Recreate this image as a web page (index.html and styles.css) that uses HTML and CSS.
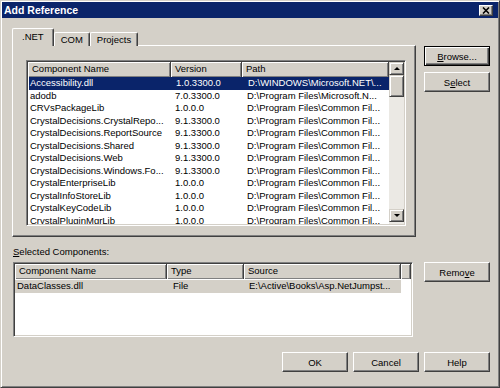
FILE: index.html
```html
<!DOCTYPE html>
<html lang="en">
<head>
  <meta charset="UTF-8">
  <title>Add Reference</title>
  <link rel="stylesheet" href="styles.css">
</head>
<body>
  <div class="window">
    <div class="titlebar">
      <span>Add Reference</span>
      <div class="close">
        <svg width="8" height="7" viewBox="0 0 8 7"><path d="M1 0.5 L7 6.5 M7 0.5 L1 6.5" stroke="#000" stroke-width="1.6"/></svg>
      </div>
    </div>

    <div class="dialog">
      <div class="upper">
        <div class="tabbox">
          <div class="tabs">
            <div class="tab active">.NET</div>
            <div class="tab">COM</div>
            <div class="tab">Projects</div>
          </div>
          <div class="panel">
            <div class="listview refs">
              <div class="lv-body">
                <div class="lv-head">
                  <div>Component Name</div>
                  <div>Version</div>
                  <div>Path</div>
                </div>
                <div class="lv-row selected"><div>Accessibility.dll</div><div>1.0.3300.0</div><div>D:\WINDOWS\Microsoft.NET\...</div></div>
                <div class="lv-row"><div>adodb</div><div>7.0.3300.0</div><div>D:\Program Files\Microsoft.N...</div></div>
                <div class="lv-row"><div>CRVsPackageLib</div><div>1.0.0.0</div><div>D:\Program Files\Common Fil...</div></div>
                <div class="lv-row"><div>CrystalDecisions.CrystalRepo...</div><div>9.1.3300.0</div><div>D:\Program Files\Common Fil...</div></div>
                <div class="lv-row"><div>CrystalDecisions.ReportSource</div><div>9.1.3300.0</div><div>D:\Program Files\Common Fil...</div></div>
                <div class="lv-row"><div>CrystalDecisions.Shared</div><div>9.1.3300.0</div><div>D:\Program Files\Common Fil...</div></div>
                <div class="lv-row"><div>CrystalDecisions.Web</div><div>9.1.3300.0</div><div>D:\Program Files\Common Fil...</div></div>
                <div class="lv-row"><div>CrystalDecisions.Windows.Fo...</div><div>9.1.3300.0</div><div>D:\Program Files\Common Fil...</div></div>
                <div class="lv-row"><div>CrystalEnterpriseLib</div><div>1.0.0.0</div><div>D:\Program Files\Common Fil...</div></div>
                <div class="lv-row"><div>CrystalInfoStoreLib</div><div>1.0.0.0</div><div>D:\Program Files\Common Fil...</div></div>
                <div class="lv-row"><div>CrystalKeyCodeLib</div><div>1.0.0.0</div><div>D:\Program Files\Common Fil...</div></div>
                <div class="lv-row"><div>CrystalPluginMgrLib</div><div>1.0.0.0</div><div>D:\Program Files\Common Fil...</div></div>
              </div>
              <div class="scrollbar">
                <div class="sb-btn"><span class="arrow up"></span></div>
                <div class="sb-thumb"></div>
                <div class="sb-track"></div>
                <div class="sb-btn"><span class="arrow down"></span></div>
              </div>
            </div>
          </div>
        </div>
        <div class="side">
          <button class="btn default"><u>B</u>rowse...</button>
          <button class="btn">S<u>e</u>lect</button>
        </div>
      </div>

      <div class="label"><u>S</u>elected Components:</div>

      <div class="lower">
        <div class="listview chosen">
          <div class="lv-body">
            <div class="lv-head">
              <div>Component Name</div>
              <div>Type</div>
              <div>Source</div>
              <div></div>
            </div>
            <div class="lv-row inactive"><div>DataClasses.dll</div><div>File</div><div>E:\Active\Books\Asp.NetJumpst...</div></div>
          </div>
        </div>
        <div class="side">
          <button class="btn">Remo<u>v</u>e</button>
        </div>
      </div>

      <div class="footer">
        <button class="btn">OK</button>
        <button class="btn">Cancel</button>
        <button class="btn">Help</button>
      </div>
    </div>
  </div>
</body>
</html>
```

FILE: styles.css
```css
* {
  box-sizing: border-box;
}
body {
  margin: 0;
  background: #d4d0c8;
  font-family: "Liberation Sans", Arial, sans-serif;
  font-size: 9.5px;
  color: #000;
}
.window {
  width: 500px;
  height: 388px;
  background: #d4d0c8;
  border: 1px solid;
  border-color: #d4d0c8 #404040 #404040 #d4d0c8;
  box-shadow: inset 1px 1px #fff, inset -1px -1px #808080;
  padding: 1px;
}
.titlebar {
  height: 16px;
  background: #0a246a;
  color: #fff;
  font-weight: bold;
  font-size: 10.5px;
  display: flex;
  align-items: center;
  justify-content: space-between;
  padding: 0 5px 0 2px;
}
.close {
  width: 14px;
  height: 11px;
  background: #d4d0c8;
  border: 1px solid;
  border-color: #fff #404040 #404040 #fff;
  box-shadow: inset -1px -1px #808080;
  display: flex;
  align-items: center;
  justify-content: center;
}
.dialog {
  padding-left: 10px;
}

/* tabs + reference list */
.upper {
  display: flex;
  margin-top: 11px;
}
.tabbox {
  width: 404px;
}
.tabs {
  display: flex;
  align-items: flex-end;
  height: 17px;
  margin-bottom: -1px;
}
.tab {
  height: 14px;
  line-height: 13px;
  padding: 0 6px;
  border: 1px solid;
  border-bottom: none;
  border-color: #fff #404040 #404040 #fff;
  box-shadow: inset -1px 0 #808080;
  border-radius: 2px 2px 0 0;
  background: #d4d0c8;
}
.tab.active {
  height: 18px;
  line-height: 15px;
  padding: 0 9px;
  position: relative;
  z-index: 1;
}
.panel {
  height: 192px;
  border: 1px solid;
  border-color: #fff #404040 #404040 #fff;
  box-shadow: inset -1px -1px #808080;
  padding: 14px 9px 9px 13px;
}

/* list views */
.listview {
  display: flex;
  background: #fff;
  border: 1px solid;
  border-color: #808080 #fff #fff #808080;
  box-shadow: inset 1px 1px #404040, inset -1px -1px #d4d0c8;
  padding: 1px;
}
.refs {
  height: 166px;
}
.lv-body {
  flex: 1;
  overflow: hidden;
}
.lv-head {
  display: grid;
  height: 15px;
}
.lv-head div {
  background: #d4d0c8;
  line-height: 14px;
  padding-left: 4px;
  border-right: 1px solid #404040;
  box-shadow: inset 1px 1px #fff, inset -1px -1px #808080;
  white-space: nowrap;
  overflow: hidden;
}
.lv-row {
  display: grid;
  height: 12.5px;
  line-height: 12.5px;
  white-space: nowrap;
}
.lv-row div {
  overflow: hidden;
}
.refs .lv-head,
.refs .lv-row {
  grid-template-columns: 143px 71px 1fr;
}
.refs .lv-row div:first-child {
  padding-left: 1px;
  margin-left: 1px;
}
.refs .lv-row div:nth-child(2) {
  padding-left: 4px;
}
.refs .lv-row div:nth-child(3) {
  padding-left: 5px;
}
.lv-row.selected {
  background: #0a246a;
  color: #fff;
  margin-left: 1px;
}
.lv-row.selected div:first-child {
  margin-left: 0;
}

.scrollbar {
  width: 15px;
  display: flex;
  flex-direction: column;
  background: #ebe9e4;
  padding-bottom: 2px;
}
.sb-btn,
.sb-thumb {
  background: #d4d0c8;
  border: 1px solid;
  border-color: #d4d0c8 #404040 #404040 #d4d0c8;
  box-shadow: inset 1px 1px #fff, inset -1px -1px #808080;
}
.sb-btn {
  height: 13px;
  display: flex;
  align-items: center;
  justify-content: center;
}
.sb-thumb {
  height: 22px;
}
.sb-track {
  flex: 1;
}
.arrow {
  width: 0;
  height: 0;
  border-left: 3px solid transparent;
  border-right: 3px solid transparent;
}
.arrow.up {
  border-bottom: 3px solid #000;
}
.arrow.down {
  border-top: 3px solid #000;
}

/* right-hand buttons */
.side {
  display: flex;
  flex-direction: column;
  gap: 6px;
  margin-left: 8px;
  padding-top: 17px;
}
.btn {
  width: 66px;
  height: 20px;
  font: inherit;
  color: #000;
  background: #d4d0c8;
  border: 1px solid;
  border-color: #fff #404040 #404040 #fff;
  box-shadow: inset -1px -1px #808080;
  padding: 0;
}
.btn.default {
  border-color: #000;
  box-shadow: inset 1px 1px #fff, inset -1px -1px #404040, inset -2px -2px #808080;
}

/* selected components */
.label {
  margin: 8px 0 0 1px;
  height: 14px;
  line-height: 14px;
}
.lower {
  display: flex;
  margin-top: 3px;
}
.chosen {
  width: 400px;
  height: 75px;
  margin-left: 1px;
}
.chosen .lv-head {
  grid-template-columns: 152px 77px 157px 1fr;
}
.chosen .lv-row {
  grid-template-columns: 152px 77px 157px;
  width: 386px;
  margin-top: 1px;
}
.chosen .lv-row div:first-child {
  padding-left: 2px;
}
.chosen .lv-row div:nth-child(2) {
  padding-left: 6px;
}
.chosen .lv-row div:nth-child(3) {
  padding-left: 5px;
}
.lv-row.inactive {
  background: #d4d0c8;
}
.lower .side {
  margin-left: 11px;
  padding-top: 0;
}

.footer {
  display: flex;
  justify-content: flex-end;
  gap: 5px;
  margin-top: 15px;
  padding-right: 8px;
}
```
